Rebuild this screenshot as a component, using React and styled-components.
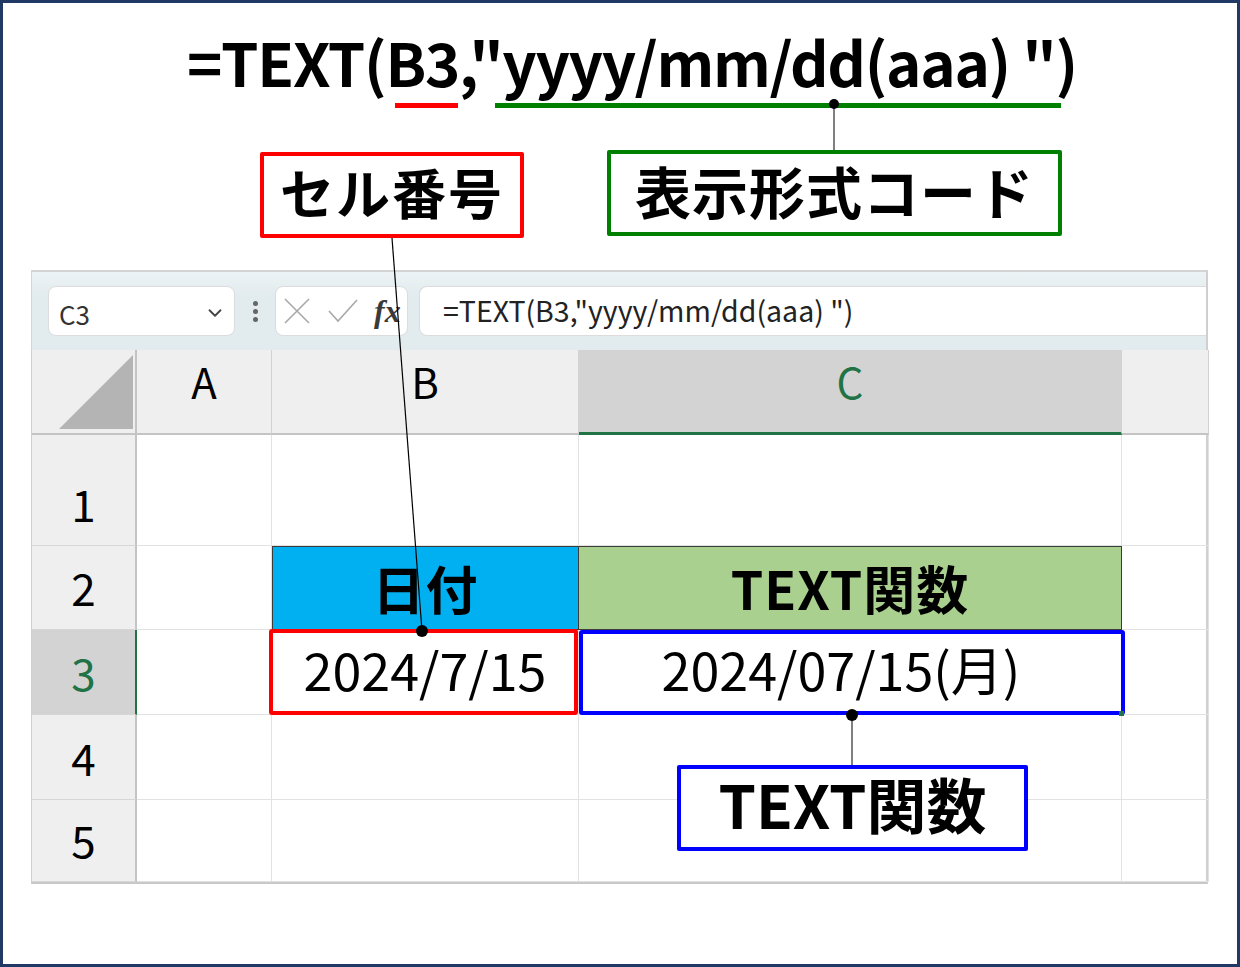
import React from 'react';
import styled, { createGlobalStyle, css } from 'styled-components';
import { ChevronDown } from 'lucide-react';

const JP = `"Noto Sans CJK JP", "Noto Sans", sans-serif`;
const GREEN = '#217346';

const GlobalStyle = createGlobalStyle`
  body {
    margin: 0;
    background: #fff;
    font-family: ${JP};
  }
`;

const Frame = styled.div`
  position: relative;
  width: 1240px;
  height: 967px;
  box-sizing: border-box;
  border: 3px solid #1f3864;
  background: #fff;
  overflow: hidden;
`;

const Title = styled.div`
  margin: 28px 0 0 184px;
  font-family: ${JP};
  font-weight: 700;
  font-size: 60px;
  line-height: 60px;
  letter-spacing: -1.3px;
  color: #000;
  white-space: pre;
`;

const LabelRow = styled.div`
  display: flex;
  align-items: flex-start;
  gap: 83px;
  margin: 59px 0 0 257px;
`;

const Callout = styled.div`
  box-sizing: border-box;
  width: ${(p) => p.$w}px;
  height: 86px;
  margin-top: ${(p) => p.$top || 0}px;
  padding-bottom: ${(p) => p.$lift || 6}px;
  border: 4px solid ${(p) => p.$color};
  border-radius: 2px;
  background: #fff;
  display: flex;
  align-items: center;
  justify-content: center;
  font-family: ${JP};
  font-weight: 700;
  font-size: ${(p) => p.$size || 54}px;
  line-height: 1;
  color: #000;
  letter-spacing: ${(p) => p.$ls || 0}px;
`;

const FloatingCallout = styled(Callout)`
  position: absolute;
  left: 674px;
  top: 762px;
  z-index: 1;
`;

const Sheet = styled.div`
  margin: 32px 0 0 28px;
  width: 1177px;
`;

const FormulaBar = styled.div`
  box-sizing: border-box;
  height: 80px;
  display: flex;
  align-items: center;
  padding-left: 16px;
  background: linear-gradient(#edf3f5, #e2ebee 30%);
  border-top: 2px solid #d4d4d4;
  border-left: 1px solid #d6d6d6;
  border-right: 2px solid #cfcfcf;
`;

const BarBox = styled.div`
  box-sizing: border-box;
  height: 50px;
  background: #fff;
  border: 1px solid #dcdcdc;
  border-radius: 8px;
  display: flex;
  align-items: center;
`;

const NameBox = styled(BarBox)`
  width: 187px;
  padding: 4px 8px 0 10px;
  justify-content: space-between;
  font-size: 26px;
  color: #333;
`;

const Grip = styled.div`
  width: 40px;
  display: flex;
  flex-direction: column;
  align-items: center;
  gap: 3px;
  span {
    width: 5px;
    height: 5px;
    border-radius: 50%;
    background: #666;
  }
`;

const FxBox = styled(BarBox)`
  width: 133px;
  padding-left: 8px;
  gap: 18px;
`;

const Fx = styled.span`
  font-family: "Liberation Serif", serif;
  font-style: italic;
  font-weight: 700;
  font-size: 32px;
  color: #3a3a3a;
  margin-left: -2px;
`;

const FormulaInput = styled(BarBox)`
  flex: 1;
  margin-left: 11px;
  border-radius: 8px 0 0 8px;
  border-right: none;
  padding: 0 0 4px 23px;
  font-size: 28.5px;
  color: #222;
  white-space: pre;
`;

const Grid = styled.div`
  display: grid;
  grid-template-columns: 105px 135px 307px 543px 87px;
  grid-template-rows: 85px 111px 84px 85px 85px 82px;
  border-left: 1px solid #d0d0d0;
  border-right: 2px solid #d0d0d0;
  border-bottom: 2px solid #c8c8c8;
`;

const Cell = styled.div`
  position: relative;
  box-sizing: border-box;
  border-right: 1px solid #e2e2e2;
  border-bottom: 1px solid #e2e2e2;
  display: flex;
  align-items: flex-end;
  justify-content: center;
  font-family: ${JP};
  font-size: 52px;
  line-height: 84px;
  color: #000;
  ${(p) =>
    p.$fill &&
    css`
      background: ${p.$fill};
      border: 1px solid #3c3c3c;
      border-left: none;
      font-weight: 700;
      font-size: 52px;
      letter-spacing: 1px;
      line-height: 80px;
      align-items: center;
    `}
  ${(p) =>
    p.$mark &&
    css`
      line-height: 70px;
      padding-bottom: 10px;
      &::after {
        content: '';
        position: absolute;
        top: ${p.$mark.t}px;
        left: ${p.$mark.l}px;
        right: ${p.$mark.r}px;
        bottom: ${p.$mark.b}px;
        border: 4px solid ${p.$mark.color};
        border-radius: 3px;
      }
    `}
`;

const FirstFill = styled(Cell)`
  border-left: 1px solid #3c3c3c;
`;

const ColHead = styled.div`
  box-sizing: border-box;
  background: ${(p) => (p.$active ? '#d3d3d3' : '#efefef')};
  border-right: 1px solid #d2d2d2;
  border-bottom: ${(p) => (p.$active ? `3px solid ${GREEN}` : '2px solid #c4c4c4')};
  display: flex;
  justify-content: center;
  font-family: ${JP};
  font-size: 42px;
  line-height: 62px;
  color: ${(p) => (p.$active ? GREEN : '#000')};
`;

const Corner = styled(ColHead)`
  border-right: 2px solid #c4c4c4;
  align-items: stretch;
`;

const RowHead = styled.div`
  box-sizing: border-box;
  background: ${(p) => (p.$active ? '#d3d3d3' : '#efefef')};
  border-right: ${(p) => (p.$active ? `2px solid ${GREEN}` : '2px solid #c4c4c4')};
  border-bottom: 1px solid #d6d6d6;
  display: flex;
  align-items: flex-end;
  justify-content: center;
  font-family: ${JP};
  font-size: 44px;
  line-height: 84px;
  color: ${(p) => (p.$active ? GREEN : '#000')};
`;

const Overlay = styled.svg`
  position: absolute;
  top: -3px;
  left: -3px;
  z-index: 2;
  pointer-events: none;
`;

const CancelIcon = () => (
  <svg width="26" height="26" viewBox="0 0 26 26">
    <path d="M1 1L25 25M25 1L1 25" stroke="#a8a8a8" strokeWidth="1.6" fill="none" />
  </svg>
);

const EnterIcon = () => (
  <svg width="30" height="24" viewBox="0 0 30 24">
    <path d="M1 12L10 22L29 1" stroke="#a8a8a8" strokeWidth="1.6" fill="none" />
  </svg>
);

const rows = [1, 2, 3, 4, 5];

export default function App() {
  return (
    <>
      <GlobalStyle />
      <Frame>
        <Title>{'=TEXT(B3,"yyyy/mm/dd(aaa) ")'}</Title>

        <LabelRow>
          <Callout $w={264} $top={2} $color="#ff0000" $ls={2}>
            セル番号
          </Callout>
          <Callout $w={455} $color="#008000" $size={56} $ls={1}>
            表示形式コード
          </Callout>
        </LabelRow>

        <Sheet>
          <FormulaBar>
            <NameBox>
              C3
              <ChevronDown size={22} strokeWidth={2} color="#444" />
            </NameBox>
            <Grip>
              <span />
              <span />
              <span />
            </Grip>
            <FxBox>
              <CancelIcon />
              <EnterIcon />
              <Fx>fx</Fx>
            </FxBox>
            <FormulaInput>{'=TEXT(B3,"yyyy/mm/dd(aaa) ")'}</FormulaInput>
          </FormulaBar>

          <Grid>
            <Corner>
              <svg width="103" height="83" viewBox="0 0 103 83">
                <polygon points="27,79 101,5 101,79" fill="#b4b4b4" />
              </svg>
            </Corner>
            <ColHead>A</ColHead>
            <ColHead>B</ColHead>
            <ColHead $active>C</ColHead>
            <ColHead />

            {rows.map((r) => (
              <React.Fragment key={r}>
                <RowHead $active={r === 3}>{r}</RowHead>
                <Cell />
                {r === 2 ? (
                  <>
                    <FirstFill $fill="#00b0f0">日付</FirstFill>
                    <Cell $fill="#a9d08e">TEXT関数</Cell>
                  </>
                ) : r === 3 ? (
                  <>
                    <Cell $mark={{ t: -1, l: -3, r: 0, b: -1, color: '#ff0000' }}>2024/7/15</Cell>
                    <Cell $mark={{ t: 0, l: 0, r: -4, b: -1, color: '#0000ff' }}>
                      <span style={{ marginRight: 18 }}>2024/07/15(月)</span>
                    </Cell>
                  </>
                ) : (
                  <>
                    <Cell />
                    <Cell />
                  </>
                )}
                <Cell />
              </React.Fragment>
            ))}
          </Grid>
        </Sheet>

        <FloatingCallout $w={351} $color="#0000ff" $size={60} $lift={10}>
          TEXT関数
        </FloatingCallout>

        <Overlay width="1240" height="967" viewBox="0 0 1240 967">
          <rect x="395" y="103" width="63" height="5" fill="#ff0000" />
          <rect x="495" y="103" width="566" height="5" fill="#008000" />
          <line x1="834" y1="104" x2="834" y2="150" stroke="#000" strokeWidth="1" />
          <circle cx="834" cy="104" r="5" fill="#000" />
          <line x1="392" y1="238" x2="422" y2="631" stroke="#000" strokeWidth="1.2" />
          <circle cx="422" cy="631" r="6" fill="#000" />
          <line x1="852" y1="715" x2="852" y2="765" stroke="#000" strokeWidth="1" />
          <circle cx="852" cy="715" r="6" fill="#000" />
          <rect x="1119" y="711" width="5" height="5" fill={GREEN} />
        </Overlay>
      </Frame>
    </>
  );
}
